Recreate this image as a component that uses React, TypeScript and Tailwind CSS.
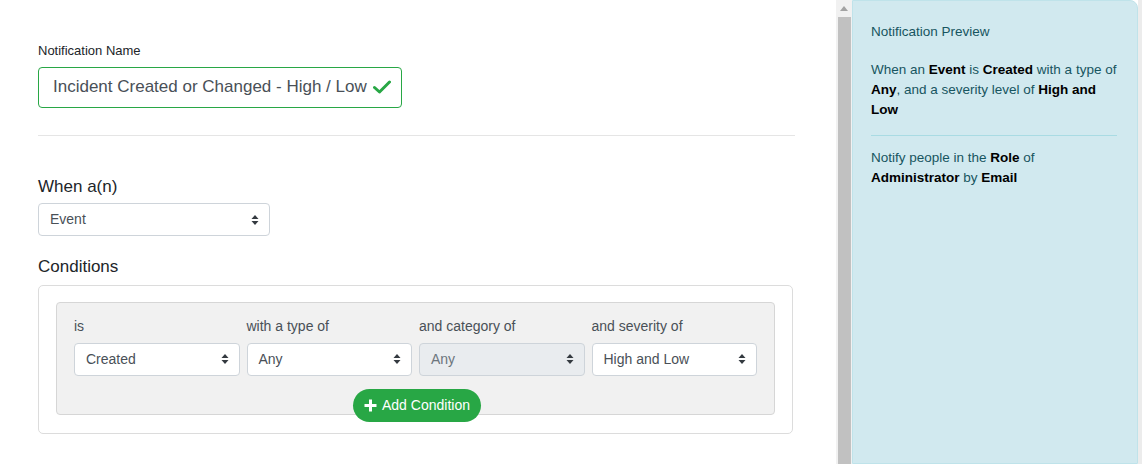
import React from 'react';

const Updown = () => (
  <svg width="8" height="12" viewBox="0 0 8 12" className="shrink-0">
    <path d="M4 1 L7.5 5 H0.5 Z" fill="#343a40" />
    <path d="M4 11 L7.5 7 H0.5 Z" fill="#343a40" />
  </svg>
);

const Select: React.FC<{ value: string; disabled?: boolean; className?: string }> = ({ value, disabled, className }) => (
  <div
    className={
      'h-[33px] flex items-center justify-between pl-[11px] pr-[10px] border border-[#ced4da] rounded-[4px] text-[14px] ' +
      (disabled ? 'bg-[#e9ecef] text-[#6c757d] ' : 'bg-white text-[#495057] ') +
      (className ?? '')
    }
  >
    <span>{value}</span>
    <Updown />
  </div>
);

const conditions = [
  { label: 'is', value: 'Created' },
  { label: 'with a type of', value: 'Any' },
  { label: 'and category of', value: 'Any', disabled: true },
  { label: 'and severity of', value: 'High and Low' },
];

export default function App() {
  return (
    <div className="flex w-[1142px] h-[464px] overflow-hidden bg-white font-['Liberation_Sans',Arial,sans-serif]">
      <main className="w-[836px] shrink-0 pl-[38px] pt-[41px]">
        <div className="w-[757px]">
          <label className="block text-[13px] text-[#212529] mb-[6px]">Notification Name</label>
          <div className="w-[364px] h-[41px] border border-[#28a745] rounded-[4px] flex items-center justify-between pl-[14px] pr-[10px]">
            <span className="text-[17px] text-[#495057] whitespace-nowrap">Incident Created or Changed - High / Low</span>
            <svg width="18" height="14" viewBox="0 0 18 14">
              <path d="M1.5 7.5 L6.5 12 L16.5 2" stroke="#28a745" strokeWidth="3" fill="none" strokeLinecap="round" strokeLinejoin="round" />
            </svg>
          </div>
          <div className="h-px bg-[#e5e5e5] mt-[27px]" />

          <h3 className="text-[17px] text-[#212529] mt-[38px] mb-[4px]">When a(n)</h3>
          <Select value="Event" className="w-[232px]" />

          <h3 className="text-[17px] text-[#212529] mt-[18px] mb-[5px]">Conditions</h3>
          <div className="w-[755px] border border-[#dcdcdc] rounded-[5px] px-[17px] pt-[16px] pb-[18px]">
            <div className="relative bg-[#f1f1f1] border border-[#d6d6d6] rounded-[4px] px-[17px] pt-[13px] pb-[38px]">
              <div className="grid grid-cols-4 gap-x-[7px]">
                {conditions.map((c) => (
                  <div key={c.label}>
                    <div className="text-[14px] text-[#495057] mb-[6px]">{c.label}</div>
                    <Select value={c.value} disabled={c.disabled} />
                  </div>
                ))}
              </div>
              <button className="absolute left-[296px] bottom-[-8px] h-[33px] px-[11px] rounded-full bg-[#28a745] text-white text-[14px] flex items-center gap-[5px]">
                <svg width="13" height="13" viewBox="0 0 13 13">
                  <path d="M6.5 0.5 V12.5 M0.5 6.5 H12.5" stroke="white" strokeWidth="3" />
                </svg>
                Add Condition
              </button>
            </div>
          </div>
        </div>
      </main>

      <div className="w-[16px] shrink-0 bg-[#f1f1f1] flex flex-col items-center">
        <svg width="8" height="5" viewBox="0 0 8 5" className="mt-[6px] mb-[6px]">
          <path d="M4 0 L8 5 H0 Z" fill="#a3a3a3" />
        </svg>
        <div className="w-[13px] flex-1 bg-[#c1c1c1]" />
      </div>

      <aside className="w-[286px] shrink-0 bg-[#d1e9ef] border border-[#bfe3ea] rounded-tr-[8px] px-[18px] pt-[21px] text-[13.5px] leading-[20px] text-[#175560]">
        <p className="mb-[18px]">Notification Preview</p>
        <p>
          When an <b className="text-black">Event</b> is <b className="text-black">Created</b> with a type of{' '}
          <b className="text-black">Any</b>, and a severity level of <b className="text-black">High and Low</b>
        </p>
        <div className="h-px bg-[#a9dbe3] mt-[15px] mb-[12px] mr-[2px]" />
        <p>
          Notify people in the <b className="text-black">Role</b> of <b className="text-black">Administrator</b> by{' '}
          <b className="text-black">Email</b>
        </p>
      </aside>
      <div className="flex-1 bg-[#ececec]" />
    </div>
  );
}
